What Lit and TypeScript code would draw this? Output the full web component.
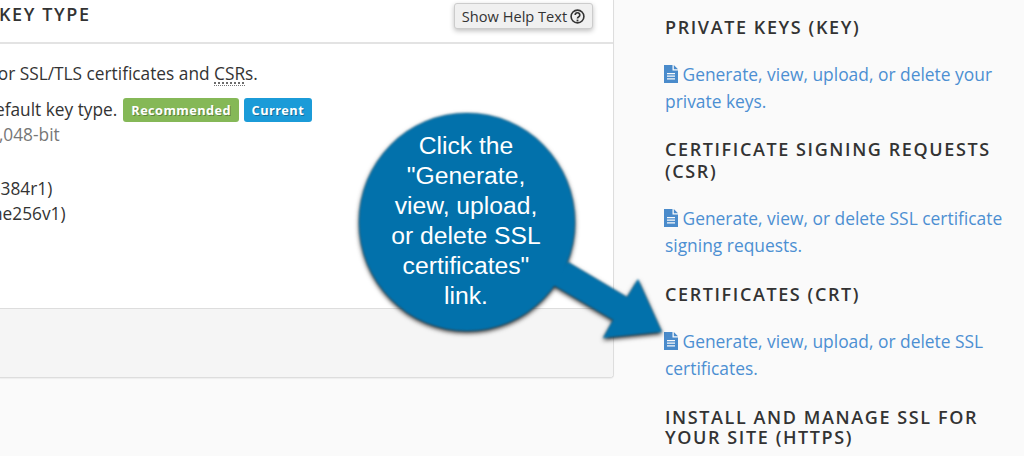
import { LitElement, html, css } from "lit";
import { customElement } from "lit/decorators.js";

const fileIcon = html`<svg class="fi" viewBox="0 0 14 18" width="14" height="18"><path fill-rule="evenodd" d="M0 0H8.5V5.5H14V18H0ZM9.8 0L14 4.2H9.8ZM3 8H11V9.2H3ZM3 10.6H11V11.8H3ZM3 13.2H11V14.4H3Z"/></svg>`;

@customElement("app-root")
export class AppRoot extends LitElement {
  static styles = css`
    :host { display: block; width: 1024px; height: 456px; overflow: hidden; position: relative; background: #fafafa; font-family: "Open Sans", sans-serif; color: #333; }
    .page { display: flex; height: 456px; align-items: flex-start; }
    .card { width: 614px; flex: none; height: 378px; box-sizing: border-box; background: #fff; border-right: 1px solid #ddd; border-bottom: 1px solid #ddd; border-radius: 0 0 4px 0; display: flex; flex-direction: column; overflow: hidden; box-shadow: 0 1px 1px rgba(0,0,0,.05); }
    .head { height: 44px; flex: none; box-sizing: border-box; border-bottom: 2px solid #e3e3e3; display: flex; justify-content: space-between; align-items: flex-start; padding: 3px 20px 0 0; }
    .title { font-size: 18px; font-weight: 600; letter-spacing: 1.6px; line-height: 22px; margin: 0 0 0 -1px; white-space: nowrap; }
    .btn { box-sizing: border-box; width: 139px; height: 26px; background: #f0f0f0; border: 1px solid #ccc; border-radius: 3px; box-shadow: 0 2px 5px rgba(0,0,0,.25); font-size: 14.6px; line-height: 24px; display: flex; align-items: center; justify-content: center; gap: 3px; white-space: nowrap; color: #333; }
    .body { flex: 1; font-size: 17.3px; line-height: 24px; white-space: nowrap; padding-top: 18px; }
    .l1 { margin-left: -8px; }
    .row { display: flex; align-items: center; gap: 6px; margin-top: 12px; margin-left: -5px; height: 24px; }
    .muted { color: #777; margin-top: 1px; margin-left: -11px; }
    .o1 { margin-top: 30px; margin-left: -10px; }
    .o2 { margin-top: 1px; margin-left: -8px; }
    abbr { text-decoration: underline dotted #555; text-underline-offset: 3px; border-bottom: 1px dotted #777; }
    .badge { box-sizing: border-box; height: 24px; padding: 0 8px; border-radius: 3px; color: #fff; font-size: 12.8px; font-weight: 700; letter-spacing: .4px; line-height: 24px; text-shadow: 1px 1px 0 rgba(0,0,0,.3); }
    .green { background: #85b857; }
    .blue { background: #1b9bd8; margin-left: -1px; padding: 0 7.5px; }
    .foot { height: 68px; flex: none; background: #f5f5f5; border-top: 1px solid #ddd; }
    .side { margin-left: 51px; flex: 1; padding-top: 16px; min-width: 0; }
    .side h2 { font-size: 18px; font-weight: 600; letter-spacing: 1.6px; line-height: 22px; margin: 0; color: #333; text-transform: uppercase; }
    .side h2.tight { line-height: 20px; }
    .side a { display: block; color: #4c8fd2; font-size: 17.4px; line-height: 27px; margin: 23px 0; }
    .side a.b1 { margin-bottom: 24px; }
    .side a.b2 { margin-bottom: 25px; }
    .fi { fill: #4a8bcb; vertical-align: -2px; margin-left: -1px; }
    .callout { position: absolute; left: 0; top: 0; pointer-events: none; filter: blur(.8px) drop-shadow(0 2px 2px rgba(0,0,0,.85)); }
    .say { position: absolute; left: 366px; top: 131px; width: 200px; text-align: center; color: #fff; font-family: "Liberation Sans", Arial, sans-serif; font-size: 24.7px; line-height: 30px; }
  `;
  render() {
    return html`
      <div class="page">
        <section class="card">
          <div class="head">
            <h3 class="title">KEY TYPE</h3>
            <div class="btn">Show Help Text <svg width="15" height="15" viewBox="0 0 15 15" fill="none" stroke="#333"><circle cx="7.5" cy="7.5" r="6.4" stroke-width="1.6"/><path d="M5.2 6a2.3 2.2 0 1 1 3.6 1.8c-.9.6-1.3.9-1.3 1.8" stroke-width="1.7"/><path d="M6.6 10.6h1.8v1.8H6.6z" fill="#333" stroke="none"/></svg></div>
          </div>
          <div class="body">
            <div class="l1">for SSL/TLS certificates and <abbr>CSR</abbr>s.</div>
            <div class="row"><span>efault key type.</span><span class="badge green">Recommended</span><span class="badge blue">Current</span></div>
            <div class="muted">2,048-bit</div>
            <div class="o1">p384r1)</div>
            <div class="o2">ne256v1)</div>
          </div>
          <div class="foot"></div>
        </section>
        <aside class="side">
          <h2>Private Keys (KEY)</h2>
          <a>${fileIcon} Generate, view, upload, or delete your private keys.</a>
          <h2>Certificate Signing Requests (CSR)</h2>
          <a class="b1">${fileIcon} Generate, view, or delete SSL certificate signing requests.</a>
          <h2>Certificates (CRT)</h2>
          <a class="b2">${fileIcon} Generate, view, upload, or delete SSL certificates.</a>
          <h2 class="tight">Install and Manage SSL for your site (HTTPS)</h2>
        </aside>
      </div>
      <svg class="callout" width="1024" height="456"><path fill="#0271ab" d="M568 262L627 297L638 279L662 332L603 338L613 320L553 285Z"/><ellipse cx="467" cy="222" rx="108" ry="109" fill="#0271ab"/></svg>
      <div class="say">Click the<br>"Generate,<br>view, upload,<br>or delete SSL<br>certificates"<br>link.</div>
    `;
  }
}
